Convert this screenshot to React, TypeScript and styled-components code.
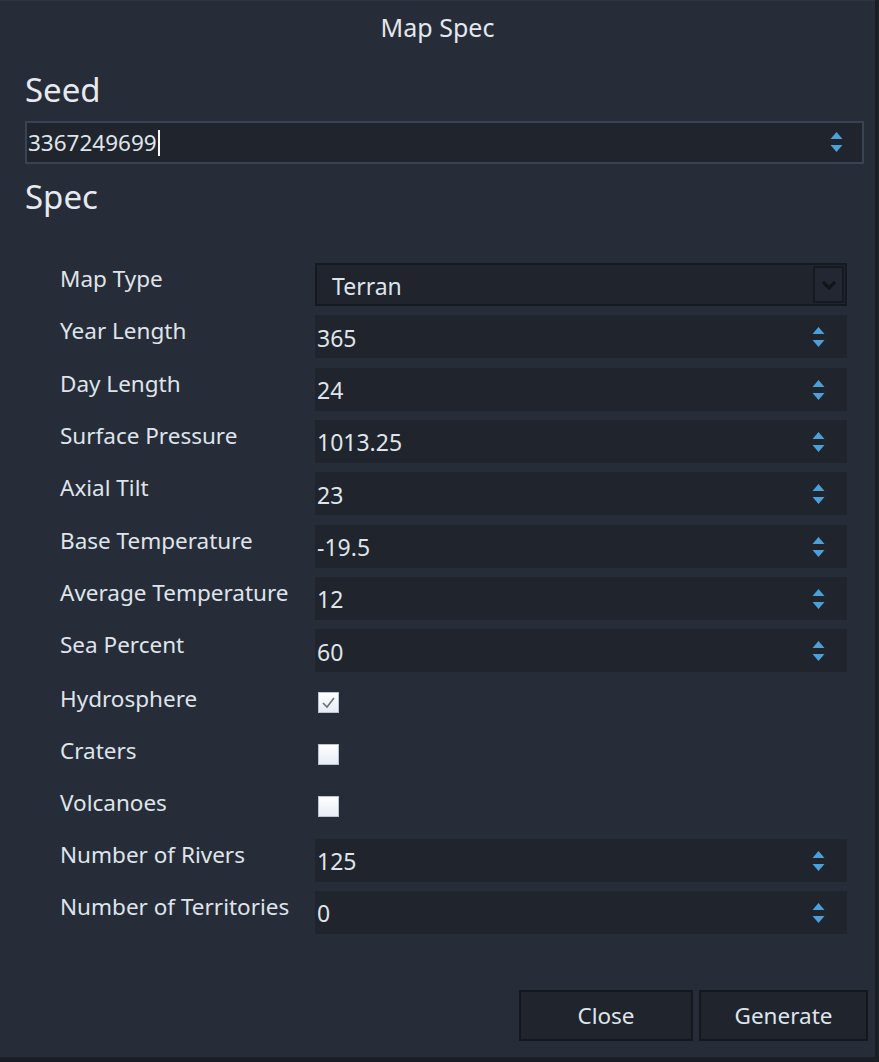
import React from "react";
import styled, { createGlobalStyle } from "styled-components";

const Global = createGlobalStyle`
  html, body { margin: 0; padding: 0; background: #1a1e25; }
  body { font-family: "Noto Sans", "Open Sans", sans-serif; }
  * { box-sizing: border-box; }
`;

const Window = styled.div`
  width: 875px;
  height: 1057px;
  background: #272d38;
  display: flex;
  flex-direction: column;
  color: #dfe4eb;
  border-top: 1px solid #2e3440;
`;

const TitleBar = styled.div`
  height: 52px;
  display: flex;
  align-items: center;
  justify-content: center;
  font-size: 25px;
  color: #e3e7ee;
`;

const Body = styled.div`
  flex: 1;
  display: flex;
  flex-direction: column;
  padding: 0 11px 0 25px;
`;

const Heading = styled.div<{ $top: number }>`
  margin-top: ${(p) => p.$top}px;
  font-size: 33px;
  line-height: 40px;
  height: 40px;
  color: #e6eaf0;
`;

const SeedBox = styled.div`
  margin-top: 11px;
  height: 43px;
  border: 2px solid #3a4354;
  background: #1f242d;
  display: flex;
  align-items: center;
  padding: 0 19px 0 1px;
  font-size: 22.5px;
`;

const Value = styled.span`
  flex: 1;
  display: flex;
  align-items: center;
`;

const Caret = styled.span`
  display: inline-block;
  width: 2px;
  height: 26px;
  background: #f4f6f8;
  margin-left: 1px;
`;

const Form = styled.div`
  margin-top: 46px;
  padding-left: 35px;
  display: flex;
  flex-direction: column;
  gap: 9.33px;
  width: 822px;
`;

const Row = styled.div`
  display: grid;
  grid-template-columns: 255px 532px;
  height: 43px;
`;

const Label = styled.div<{ $pad?: number }>`
  font-size: 22.5px;
  line-height: 30px;
  padding-top: ${(p) => p.$pad ?? 1}px;
  color: #dfe4eb;
  white-space: nowrap;
`;

const Spin = styled.div`
  height: 43px;
  background: #1f242d;
  display: flex;
  align-items: center;
  padding: 2px 22px 0 2px;
  font-size: 23px;
`;

const Combo = styled.div`
  height: 43px;
  background: #1f242d;
  border: 2px solid #151920;
  display: flex;
  align-items: stretch;
  font-size: 23px;
`;

const ComboText = styled.div`
  flex: 1;
  display: flex;
  align-items: center;
  padding: 2px 0 0 15px;
`;

const DropButton = styled.div`
  width: 31px;
  margin: 1px;
  border: 2px solid #151920;
  display: flex;
  align-items: center;
  justify-content: center;
  background: #222731;
`;

const CheckCell = styled.div`
  display: flex;
  align-items: flex-start;
  padding: 10px 0 0 3px;
`;

const CheckBox = styled.div`
  width: 21px;
  height: 21px;
  background: linear-gradient(#ffffff, #e6edf5);
  border: 1px solid #b9c3cf;
  display: flex;
  align-items: center;
  justify-content: center;
`;

const Footer = styled.div`
  margin-top: auto;
  margin-bottom: 16px;
  margin-right: -4px;
  display: flex;
  justify-content: flex-end;
  gap: 6px;
`;

const Button = styled.div<{ $w: number }>`
  width: ${(p) => p.$w}px;
  height: 51px;
  background: #1f242d;
  border: 2px solid #14181e;
  display: flex;
  align-items: center;
  justify-content: center;
  font-size: 22.5px;
  color: #dfe4eb;
`;

const Arrows = () => (
  <svg width="13" height="21" viewBox="0 0 13 21">
    <polygon points="6.5,0 12.5,7 0.5,7" fill="#4ba0d8" />
    <polygon points="0.5,13 12.5,13 6.5,20" fill="#4ba0d8" />
  </svg>
);

const Chevron = () => (
  <svg width="16" height="10" viewBox="0 0 16 10">
    <polyline points="2,2 8,8 14,2" fill="none" stroke="#11151a" strokeWidth="3.2" />
  </svg>
);

const Tick = () => (
  <svg width="15" height="13" viewBox="0 0 15 13">
    <polyline points="2,7 6,11 13,2" fill="none" stroke="#6a7078" strokeWidth="1.6" />
  </svg>
);

type Field =
  | { label: string; kind: "spin"; value: string }
  | { label: string; kind: "combo"; value: string }
  | { label: string; kind: "check"; checked: boolean };

const fields: Field[] = [
  { label: "Map Type", kind: "combo", value: "Terran" },
  { label: "Year Length", kind: "spin", value: "365" },
  { label: "Day Length", kind: "spin", value: "24" },
  { label: "Surface Pressure", kind: "spin", value: "1013.25" },
  { label: "Axial Tilt", kind: "spin", value: "23" },
  { label: "Base Temperature", kind: "spin", value: "-19.5" },
  { label: "Average Temperature", kind: "spin", value: "12" },
  { label: "Sea Percent", kind: "spin", value: "60" },
  { label: "Hydrosphere", kind: "check", checked: true },
  { label: "Craters", kind: "check", checked: false },
  { label: "Volcanoes", kind: "check", checked: false },
  { label: "Number of Rivers", kind: "spin", value: "125" },
  { label: "Number of Territories", kind: "spin", value: "0" },
];

export default function App() {
  return (
    <>
      <Global />
      <Window>
        <TitleBar>Map Spec</TitleBar>
        <Body>
          <Heading $top={17}>Seed</Heading>
          <SeedBox>
            <Value>
              3367249699
              <Caret />
            </Value>
            <Arrows />
          </SeedBox>
          <Heading $top={13}>Spec</Heading>
          <Form>
            {fields.map((f) => (
              <Row key={f.label}>
                <Label $pad={f.kind === "check" ? 2 : 1}>{f.label}</Label>
                {f.kind === "combo" && (
                  <Combo>
                    <ComboText>{f.value}</ComboText>
                    <DropButton>
                      <Chevron />
                    </DropButton>
                  </Combo>
                )}
                {f.kind === "spin" && (
                  <Spin>
                    <Value>{f.value}</Value>
                    <Arrows />
                  </Spin>
                )}
                {f.kind === "check" && (
                  <CheckCell>
                    <CheckBox>{f.checked && <Tick />}</CheckBox>
                  </CheckCell>
                )}
              </Row>
            ))}
          </Form>
          <Footer>
            <Button $w={174}>Close</Button>
            <Button $w={169}>Generate</Button>
          </Footer>
        </Body>
      </Window>
    </>
  );
}
